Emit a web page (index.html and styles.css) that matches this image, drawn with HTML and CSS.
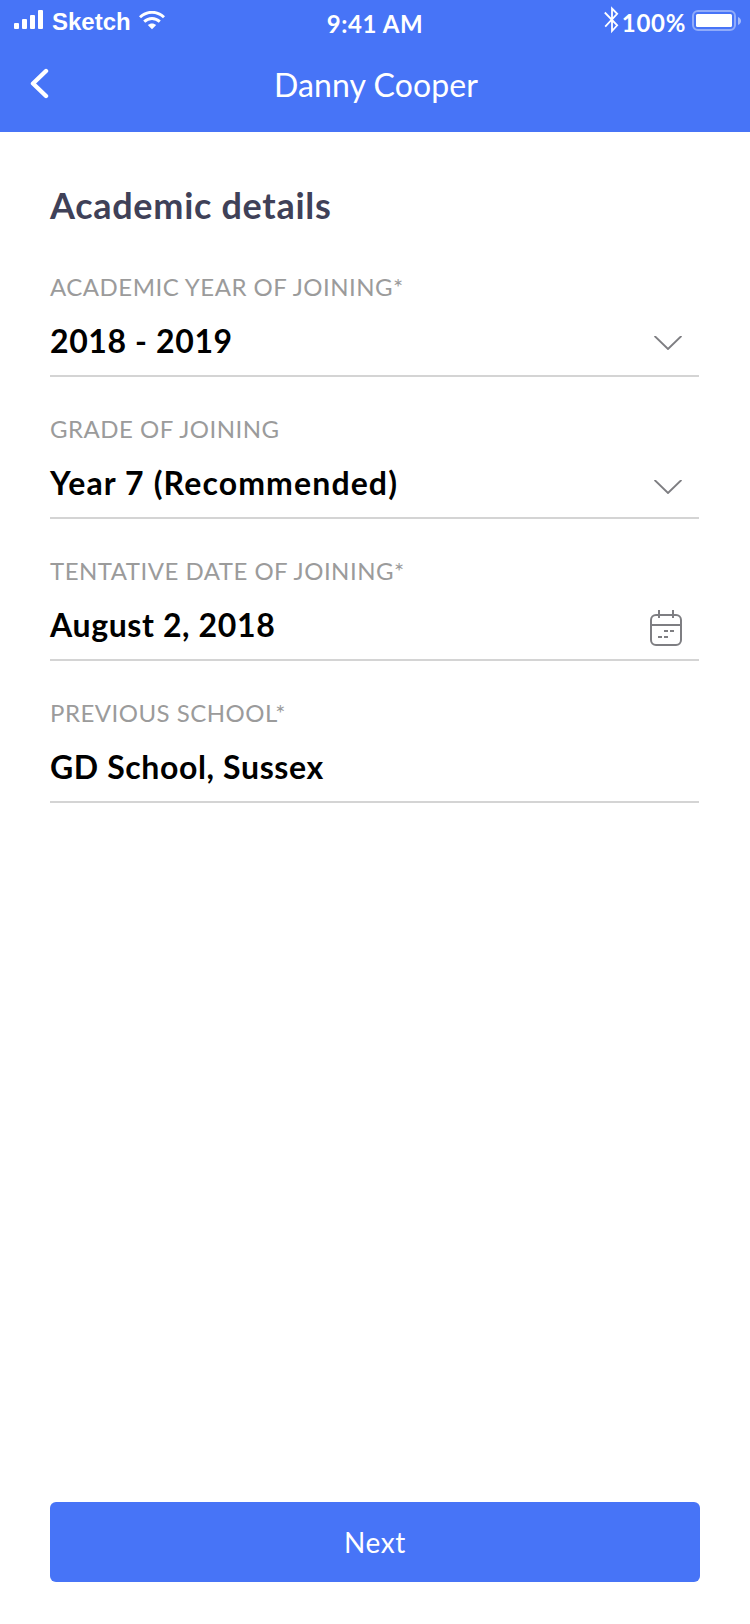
FILE: index.html
```html
<!DOCTYPE html>
<html lang="en">
<head>
<meta charset="utf-8">
<title>Danny Cooper</title>
<link rel="stylesheet" href="styles.css">
</head>
<body>
<div class="screen">
  <header class="header">
    <div class="status">
      <div class="carrier">
        <svg class="signal" width="30" height="20" viewBox="0 0 30 20" fill="#fff"><rect x="0" y="13" width="5" height="6" rx="1"/><rect x="8" y="9" width="5" height="10" rx="1"/><rect x="16" y="5" width="5" height="14" rx="1"/><rect x="24" y="0" width="5" height="19" rx="1"/></svg>
        <span class="carrier-name">Sketch</span>
        <svg class="wifi" width="26" height="19" viewBox="0 0 26 19"><path d="M1 6.2C8 -.4 18 -.4 25 6.2M5.2 10.6c4.6-4.2 11-4.2 15.6 0" fill="none" stroke="#fff" stroke-width="2.9"/><path d="M8.8 14.1c2.5-2.1 5.9-2.1 8.4 0L13 18.3z" fill="#fff"/></svg>
      </div>
      <span class="time">9:41 AM</span>
      <div class="power">
        <svg class="bluetooth" width="16" height="28" viewBox="0 0 16 28" fill="none" stroke="#fff" stroke-width="1.8"><path d="M.8 6.5 13.2 19.3 8 25V2.5l5.2 5.3L1.2 20.6"/></svg>
        <span class="percent">100%</span>
        <svg class="battery" width="50" height="21" viewBox="0 0 50 21" fill="#fff"><rect x="1" y="1" width="42" height="19" rx="5" fill="none" stroke="#fff" stroke-width="2" opacity=".4"/><rect x="4" y="4" width="36" height="13" rx="1.5"/><path d="M46 7c4 1.500 4 6.500 0 8z" opacity=".5"/></svg>
      </div>
    </div>
    <nav class="nav">
      <svg class="back" width="20" height="32" viewBox="0 0 20 32" fill="none" stroke="#fff" stroke-width="4.400" stroke-linecap="round" stroke-linejoin="round"><path d="M16 3 3 15.500 16 28"/></svg>
      <h1 class="nav-title">Danny Cooper</h1>
    </nav>
  </header>
  <main class="content">
    <h2 class="title">Academic details</h2>
    <div class="fields">
      <div class="field">
        <div class="label">ACADEMIC YEAR OF JOINING*</div>
        <div class="row"><span class="value">2018 - 2019</span>
          <svg class="chevron" width="28" height="14" viewBox="0 0 28 14" fill="none" stroke="#7e7e82" stroke-width="1.900"><path d="M.6 0 14 13 27.400 0"/></svg></div>
      </div>
      <div class="field">
        <div class="label">GRADE OF JOINING</div>
        <div class="row"><span class="value value-wide">Year 7 (Recommended)</span>
          <svg class="chevron chevron-low" width="28" height="14" viewBox="0 0 28 14" fill="none" stroke="#7e7e82" stroke-width="1.900"><path d="M.6 0 14 13 27.400 0"/></svg></div>
      </div>
      <div class="field">
        <div class="label">TENTATIVE DATE OF JOINING*</div>
        <div class="row"><span class="value">August 2, 2018</span>
          <svg class="calendar" width="32" height="36" viewBox="0 0 32 36" fill="none" stroke="#7e7e82" stroke-width="2"><rect x="1" y="5" width="30" height="30" rx="5"/><path d="M1 15h30M9 0v8M23 0v8M14 21h4M20 21h4M8 27h4M14 27h4"/></svg></div>
      </div>
      <div class="field">
        <div class="label">PREVIOUS SCHOOL*</div>
        <div class="row"><span class="value">GD School, Sussex</span></div>
      </div>
    </div>
    <button class="next" type="button">Next</button>
  </main>
</div>
</body>
</html>
```
FILE: styles.css
```css
* { box-sizing: border-box; }
body {
  margin: 0;
  background: #fff;
  font-family: Lato, "Liberation Sans", sans-serif;
}
h1, h2 { margin: 0; }
svg { display: block; flex: none; }
.screen {
  width: 750px;
  height: 1624px;
  display: flex;
  flex-direction: column;
}
.header {
  height: 132px;
  background: #4774f7;
  color: #fff;
}
.status {
  height: 46px;
  padding: 0 8px 0 14px;
  display: grid;
  grid-template-columns: 1fr auto 1fr;
  font-size: 24px;
  line-height: 30px;
}
.carrier, .power { display: flex; align-items: flex-start; }
.power { justify-content: flex-end; }
.signal { margin-top: 10px; }
.carrier-name {
  margin: 7px 8px 0;
  font-family: "Liberation Sans", Arial, sans-serif;
  font-weight: 700;
}
.wifi { margin-top: 11px; }
.time {
  margin: 9px 6px 0 0;
  font-weight: 700;
  letter-spacing: .6px;
}
.bluetooth { margin: 6px 2px 0 0; }
.percent {
  margin: 8px 6px 0 0;
  font-weight: 700;
  letter-spacing: .7px;
}
.battery { margin-top: 10px; }
.nav {
  height: 78px;
  padding: 0 30px;
  display: grid;
  grid-template-columns: 40px 1fr 40px;
  align-items: center;
}
.back { margin-bottom: 3px; }
.nav-title {
  font-size: 32px;
  line-height: 40px;
  font-weight: 400;
  letter-spacing: .1px;
  text-align: center;
  padding-left: 2px;
}
.content {
  flex: 1;
  display: flex;
  flex-direction: column;
  padding: 51px 50px 42px;
}
.title {
  font-size: 36px;
  line-height: 44px;
  font-weight: 700;
  letter-spacing: .7px;
  color: #3f4158;
}
.fields {
  margin-top: 45px;
  display: flex;
  flex-direction: column;
  gap: 37px;
}
.field {
  width: 649px;
  height: 105px;
  border-bottom: 2px solid #d4d4d4;
}
.label {
  font-size: 24px;
  line-height: 30px;
  letter-spacing: .49px;
  color: #9b9b9b;
}
.row {
  margin-top: 19px;
  display: flex;
  justify-content: space-between;
  align-items: flex-start;
}
.value {
  font-size: 32px;
  line-height: 40px;
  font-weight: 700;
  letter-spacing: .62px;
  color: #000;
}
.value-wide { letter-spacing: 1.12px; }
.chevron { margin: 15px 17px 0 0; }
.chevron-low { margin-top: 17px; }
.calendar { margin: 5px 17px 0 0; }
.next {
  margin-top: auto;
  height: 80px;
  padding: 0;
  border: 0;
  border-radius: 6px;
  background: #4774f7;
  color: #fff;
  font: 400 28px/40px Lato, "Liberation Sans", sans-serif;
  letter-spacing: .6px;
}
```
